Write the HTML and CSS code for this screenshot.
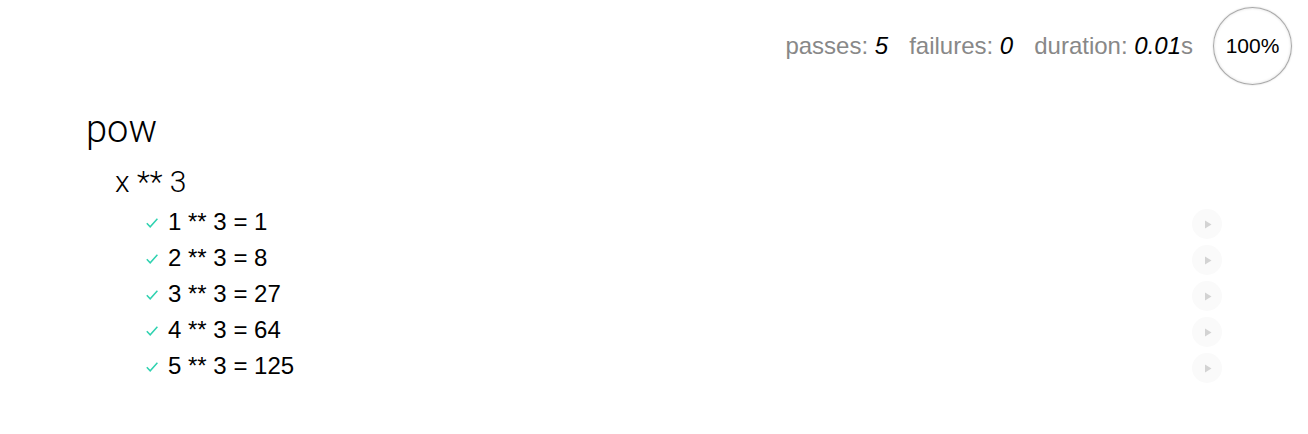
FILE: index.html
```html
<!DOCTYPE html>
<html>
<head>
<meta charset="utf-8">
<link rel="stylesheet" href="styles.css">
</head>
<body>
<header class="stats">
  <ul class="stats-list">
    <li class="stat">passes: <em>5</em></li>
    <li class="stat">failures: <em>0</em></li>
    <li class="stat">duration: <em>0.01</em>s</li>
  </ul>
  <div class="progress">100%</div>
</header>
<main class="report">
  <section class="suite">
    <h1 class="suite-title">pow</h1>
    <section class="sub-suite">
      <h2 class="sub-title">x ** 3</h2>
      <ul class="tests">
        <li class="test">
          <svg class="check" width="12" height="10" viewBox="0 0 12 10"><path d="M0.8 5.2 L4.2 8.8 L11.4 0.8" fill="none" stroke="#2fd2b0" stroke-width="1.5"/></svg>
          <span class="test-title">1 ** 3 = 1</span>
          <a class="replay"><svg width="8" height="9" viewBox="0 0 8 9"><path d="M1 0.5 L7.5 4.5 L1 8.5 Z" fill="#d3d3d3"/></svg></a>
        </li>
        <li class="test">
          <svg class="check" width="12" height="10" viewBox="0 0 12 10"><path d="M0.8 5.2 L4.2 8.8 L11.4 0.8" fill="none" stroke="#2fd2b0" stroke-width="1.5"/></svg>
          <span class="test-title">2 ** 3 = 8</span>
          <a class="replay"><svg width="8" height="9" viewBox="0 0 8 9"><path d="M1 0.5 L7.5 4.5 L1 8.5 Z" fill="#d3d3d3"/></svg></a>
        </li>
        <li class="test">
          <svg class="check" width="12" height="10" viewBox="0 0 12 10"><path d="M0.8 5.2 L4.2 8.8 L11.4 0.8" fill="none" stroke="#2fd2b0" stroke-width="1.5"/></svg>
          <span class="test-title">3 ** 3 = 27</span>
          <a class="replay"><svg width="8" height="9" viewBox="0 0 8 9"><path d="M1 0.5 L7.5 4.5 L1 8.5 Z" fill="#d3d3d3"/></svg></a>
        </li>
        <li class="test">
          <svg class="check" width="12" height="10" viewBox="0 0 12 10"><path d="M0.8 5.2 L4.2 8.8 L11.4 0.8" fill="none" stroke="#2fd2b0" stroke-width="1.5"/></svg>
          <span class="test-title">4 ** 3 = 64</span>
          <a class="replay"><svg width="8" height="9" viewBox="0 0 8 9"><path d="M1 0.5 L7.5 4.5 L1 8.5 Z" fill="#d3d3d3"/></svg></a>
        </li>
        <li class="test">
          <svg class="check" width="12" height="10" viewBox="0 0 12 10"><path d="M0.8 5.2 L4.2 8.8 L11.4 0.8" fill="none" stroke="#2fd2b0" stroke-width="1.5"/></svg>
          <span class="test-title">5 ** 3 = 125</span>
          <a class="replay"><svg width="8" height="9" viewBox="0 0 8 9"><path d="M1 0.5 L7.5 4.5 L1 8.5 Z" fill="#d3d3d3"/></svg></a>
        </li>
      </ul>
    </section>
  </section>
</main>
</body>
</html>
```

FILE: styles.css
```css
html, body {
  margin: 0;
  padding: 0;
  background: #fff;
}
body {
  font-family: "Helvetica Neue", Helvetica, "Liberation Sans", Arial, sans-serif;
  color: #000;
}
ul, li {
  margin: 0;
  padding: 0;
  list-style: none;
}
.stats {
  display: flex;
  justify-content: flex-end;
  align-items: center;
  gap: 20px;
  padding: 7px 16px 0 0;
  height: 78px;
}
.stats-list {
  display: flex;
  gap: 21px;
  font-size: 24px;
  line-height: 28px;
  color: #888;
}
.stat em {
  color: #000;
  font-style: italic;
}
.progress {
  box-sizing: border-box;
  width: 79px;
  height: 78px;
  border-radius: 50%;
  border: 1.5px solid #a9a9a9;
  box-shadow: 0 0 2px rgba(0,0,0,0.18), inset 0 0 3px rgba(0,0,0,0.14);
  display: flex;
  align-items: center;
  justify-content: center;
  font-size: 21px;
  color: #000;
}
.report {
  padding: 0 86px 0 82px;
}
.suite-title {
  margin: 21px 0 0 4px;
  font-family: Roboto, "Liberation Sans", sans-serif;
  font-weight: 300;
  font-size: 38px;
  line-height: 46px;
}
.sub-suite {
  margin-left: 33px;
}
.sub-title {
  margin: 14px 0 0 0;
  font-family: Roboto, "Liberation Sans", sans-serif;
  font-weight: 300;
  font-size: 30px;
  line-height: 32px;
}
.tests {
  margin: 6px 0 0 31px;
}
.test {
  display: flex;
  align-items: center;
  height: 36px;
  font-size: 24px;
  line-height: 36px;
}
.check {
  flex: none;
  margin: 2px 10px 0 0;
}
.test-title {
  flex: 1;
}
.replay {
  flex: none;
  align-self: flex-start;
  margin-top: 5px;
  width: 30px;
  height: 30px;
  border-radius: 50%;
  background: #fafafa;
  display: flex;
  align-items: center;
  justify-content: center;
}
.replay svg {
  margin-left: 2px;
}
```
